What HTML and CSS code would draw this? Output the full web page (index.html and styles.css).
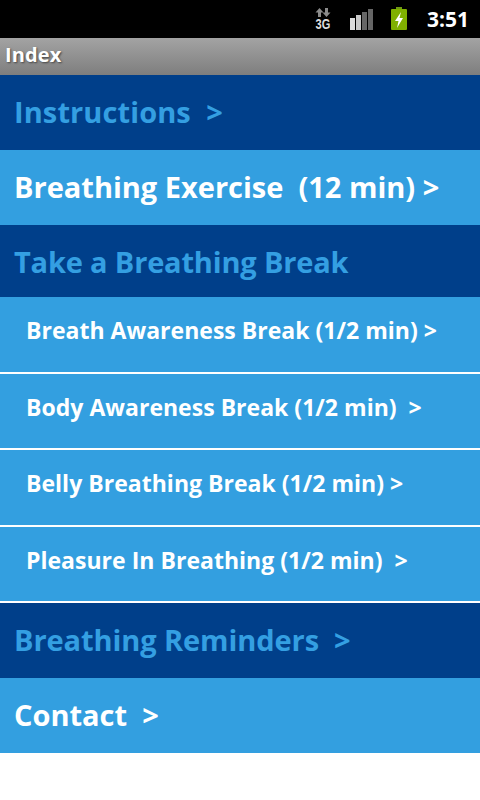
FILE: index.html
```html
<!DOCTYPE html>
<html lang="en">
<head>
    <meta charset="UTF-8">
    <meta name="viewport" content="width=device-width, initial-scale=1.0">
    <title>Index</title>
    <link rel="stylesheet" href="styles.css">
</head>
<body>
    <div class="status-bar">
        <svg class="icon-3g" width="16" height="26" viewBox="0 0 16 26">
            <path d="M4.5 2 L0.5 6.5 H3 V11 H6 V6.5 H8.5 Z" fill="#8a8a8a"/>
            <path d="M11.5 11 L15.5 6.5 H13 V2 H10 V6.5 H7.5 Z" fill="#8a8a8a"/>
            <text transform="translate(0.5 23) scale(.74 1)" class="net-text">3G</text>
        </svg>
        <svg class="icon-signal" width="24" height="22" viewBox="0 0 24 22">
            <rect x="0" y="10" width="5" height="12" fill="#dcdcdc"/>
            <rect x="6" y="7" width="5" height="15" fill="#c8c8c8"/>
            <rect x="12" y="4" width="5" height="18" fill="#666"/>
            <rect x="18" y="1" width="5" height="21" fill="#666"/>
        </svg>
        <svg class="icon-battery" width="16" height="24" viewBox="0 0 16 24">
            <rect x="5" y="0" width="6" height="3" fill="#6f9a10"/>
            <rect x="0" y="2" width="16" height="21" rx="1" fill="#80b000"/>
            <path d="M10 5 L4 14 H7.5 L6 21 L12 11 H8.5 Z" fill="#fff"/>
        </svg>
        <span class="clock">3:51</span>
    </div>
    <div class="title-bar">Index</div>
    <ul class="menu">
        <li class="row section big wide">Instructions&nbsp; &gt;</li>
        <li class="row plain big">Breathing Exercise&nbsp; (12 min) &gt;</li>
        <li class="row section big short tight">Take a Breathing Break</li>
        <li class="row item">Breath Awareness Break (1/2 min) &gt;</li>
        <li class="row item">Body Awareness Break (1/2 min)&nbsp; &gt;</li>
        <li class="row item">Belly Breathing Break (1/2 min) &gt;</li>
        <li class="row item">Pleasure In Breathing (1/2 min)&nbsp; &gt;</li>
        <li class="row section big snug">Breathing Reminders&nbsp; &gt;</li>
        <li class="row plain big">Contact&nbsp; &gt;</li>
    </ul>
</body>
</html>
```
FILE: styles.css
```css
body {
    margin: 0;
    background: #fff;
    font-family: "Open Sans", "Noto Sans", sans-serif;
    font-weight: bold;
}

.status-bar {
    height: 38px;
    background: #000;
    display: flex;
    align-items: center;
    justify-content: flex-end;
    padding-right: 11px;
    box-sizing: border-box;
}

.net-text {
    font-family: "Liberation Sans", sans-serif;
    font-size: 15px;
    font-weight: bold;
    fill: #dcdcdc;
}

.icon-3g { margin-right: 19px; }
.icon-signal { margin-right: 17px; }
.icon-battery { margin-right: 20px; }

.clock {
    color: #fff;
    font-size: 21px;
    line-height: 24px;
}

.title-bar {
    height: 37px;
    background: linear-gradient(#a3a3a3, #7e7e7e);
    color: #fff;
    font-size: 20px;
    letter-spacing: .1px;
    line-height: 34px;
    padding-left: 5px;
    text-shadow: 1px 1px 2px #444;
}

.menu {
    list-style: none;
    margin: 0;
    padding: 0;
}

.row {
    display: flex;
    align-items: center;
    white-space: pre;
    box-sizing: border-box;
}

.big {
    height: 75px;
    padding-left: 14px;
    padding-bottom: 2px;
    font-size: 29px;
}

.short {
    height: 72px;
    padding-bottom: 0;
}

.wide { letter-spacing: .1px; }
.tight { letter-spacing: -.17px; }
.snug { letter-spacing: -.08px; }

.section {
    background: #003f8a;
    color: #349fe2;
}

.plain {
    background: #339fe0;
    color: #fff;
}

.item {
    height: 76.5px;
    padding-left: 26px;
    padding-bottom: 8px;
    background: #339fe0;
    color: #fff;
    font-size: 23px;
    letter-spacing: .02px;
    border-bottom: 2px solid #fff;
}
```
